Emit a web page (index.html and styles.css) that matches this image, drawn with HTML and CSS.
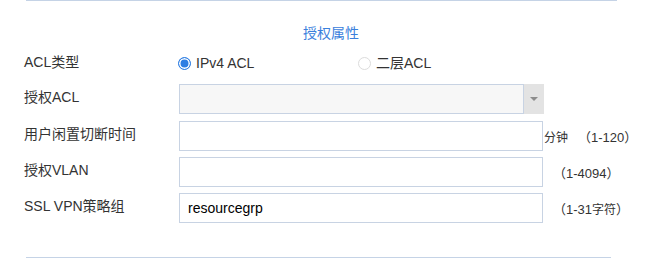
FILE: index.html
```html
<!DOCTYPE html>
<html lang="zh-CN">

<head>
  <meta charset="UTF-8">
  <meta name="viewport" content="width=device-width, initial-scale=1.0">
  <title>授权属性</title>
  <link rel="stylesheet" href="styles.css">
</head>

<body>
  <section class="panel">
    <h3 class="panel__title">授权属性</h3>

    <form class="form" autocomplete="off">
      <div class="form__row form__row--radio">
        <span class="form__label">ACL类型</span>
        <div class="form__options">
          <label class="radio radio--checked"><span class="radio__mark"></span>IPv4 ACL</label>
          <label class="radio"><span class="radio__mark"></span>二层ACL</label>
        </div>
      </div>

      <div class="form__row form__row--select">
        <span class="form__label">授权ACL</span>
        <div class="select">
          <span class="select__box"></span>
          <span class="select__arrow"></span>
        </div>
      </div>

      <div class="form__row">
        <label class="form__label" for="idle">用户闲置切断时间</label>
        <input class="form__input" type="text" id="idle">
        <span class="form__hint"><span class="form__unit">分钟</span>（1-120）</span>
      </div>

      <div class="form__row">
        <label class="form__label" for="vlan">授权VLAN</label>
        <input class="form__input" type="text" id="vlan">
        <span class="form__hint form__hint--gap">（1-4094）</span>
      </div>

      <div class="form__row">
        <label class="form__label" for="policy">SSL VPN策略组</label>
        <input class="form__input" type="text" id="policy" value="resourcegrp">
        <span class="form__hint form__hint--gap">（1-31<span class="form__cjk">字符</span>）</span>
      </div>
    </form>

    <div class="panel__footer"></div>
  </section>
</body>

</html>
```

FILE: styles.css
```css
* {
  box-sizing: border-box;
}

body {
  margin: 0;
  font-family: "Liberation Sans", "Noto Sans CJK SC", sans-serif;
  font-size: 14px;
  color: #333;
  background-color: #fff;
}

.panel {
  padding-left: 24px;
}

.panel::before {
  content: "";
  display: block;
  width: 591px;
  margin-left: 2px;
  border-top: 1px solid #c5d3e6;
}

.panel__title {
  margin: 22px 0 0;
  padding-left: 279px;
  font-size: 14px;
  font-weight: normal;
  line-height: 20px;
  color: #3a80dc;
}

.form {
  display: flex;
  flex-direction: column;
  gap: 6px;
  margin-top: 5px;
}

.form__row {
  display: grid;
  grid-template-columns: 155px 364px auto;
  align-items: center;
  height: 30px;
}

.form__row--select {
  margin-bottom: 1px;
}

.form__label {
  padding-bottom: 5px;
  line-height: 20px;
}

.form__row--radio .form__label {
  padding-bottom: 2px;
}

.form__options {
  display: flex;
  grid-column: 2 / 4;
  margin-left: -1px;
}

.radio {
  display: flex;
  align-items: center;
  gap: 5px;
  width: 180px;
  line-height: 20px;
}

.radio__mark {
  width: 13px;
  height: 13px;
  border: 1px solid #dcdcdc;
  border-radius: 50%;
  background-color: #fff;
}

.radio--checked .radio__mark {
  border: 1.5px solid #2f7fe3;
  box-shadow: inset 0 0 0 1.5px #fff;
  background-color: #2f7fe3;
}

.select {
  display: flex;
  width: 365px;
  height: 30px;
}

.select__box {
  flex: 1;
  border: 1px solid #c8d3e3;
  background-color: #f7f7f7;
}

.select__arrow {
  position: relative;
  width: 20px;
  background-color: #e3e3e3;
}

.select__arrow::after {
  content: "";
  position: absolute;
  top: 13px;
  left: 6px;
  border-top: 4px solid #8c8c8c;
  border-left: 4px solid transparent;
  border-right: 4px solid transparent;
}

.form__input {
  width: 364px;
  height: 30px;
  margin: 0;
  padding: 0 8px;
  border: 1px solid #c8d3e3;
  outline: none;
  background-color: #fff;
  color: #000;
  font-family: "Liberation Sans", "Noto Sans CJK SC", sans-serif;
  font-size: 14px;
}

.form__hint {
  display: flex;
  align-items: baseline;
  font-size: 13px;
  color: #333;
  white-space: nowrap;
}

.form__unit,
.form__cjk {
  font-size: 12px;
}

.form__unit {
  width: 34px;
  margin-left: 1px;
}

.form__hint--gap {
  padding-left: 10px;
}

.panel__footer {
  width: 585px;
  margin: 34px 0 0 2px;
  border-top: 1px solid #c5d3e6;
}
```
